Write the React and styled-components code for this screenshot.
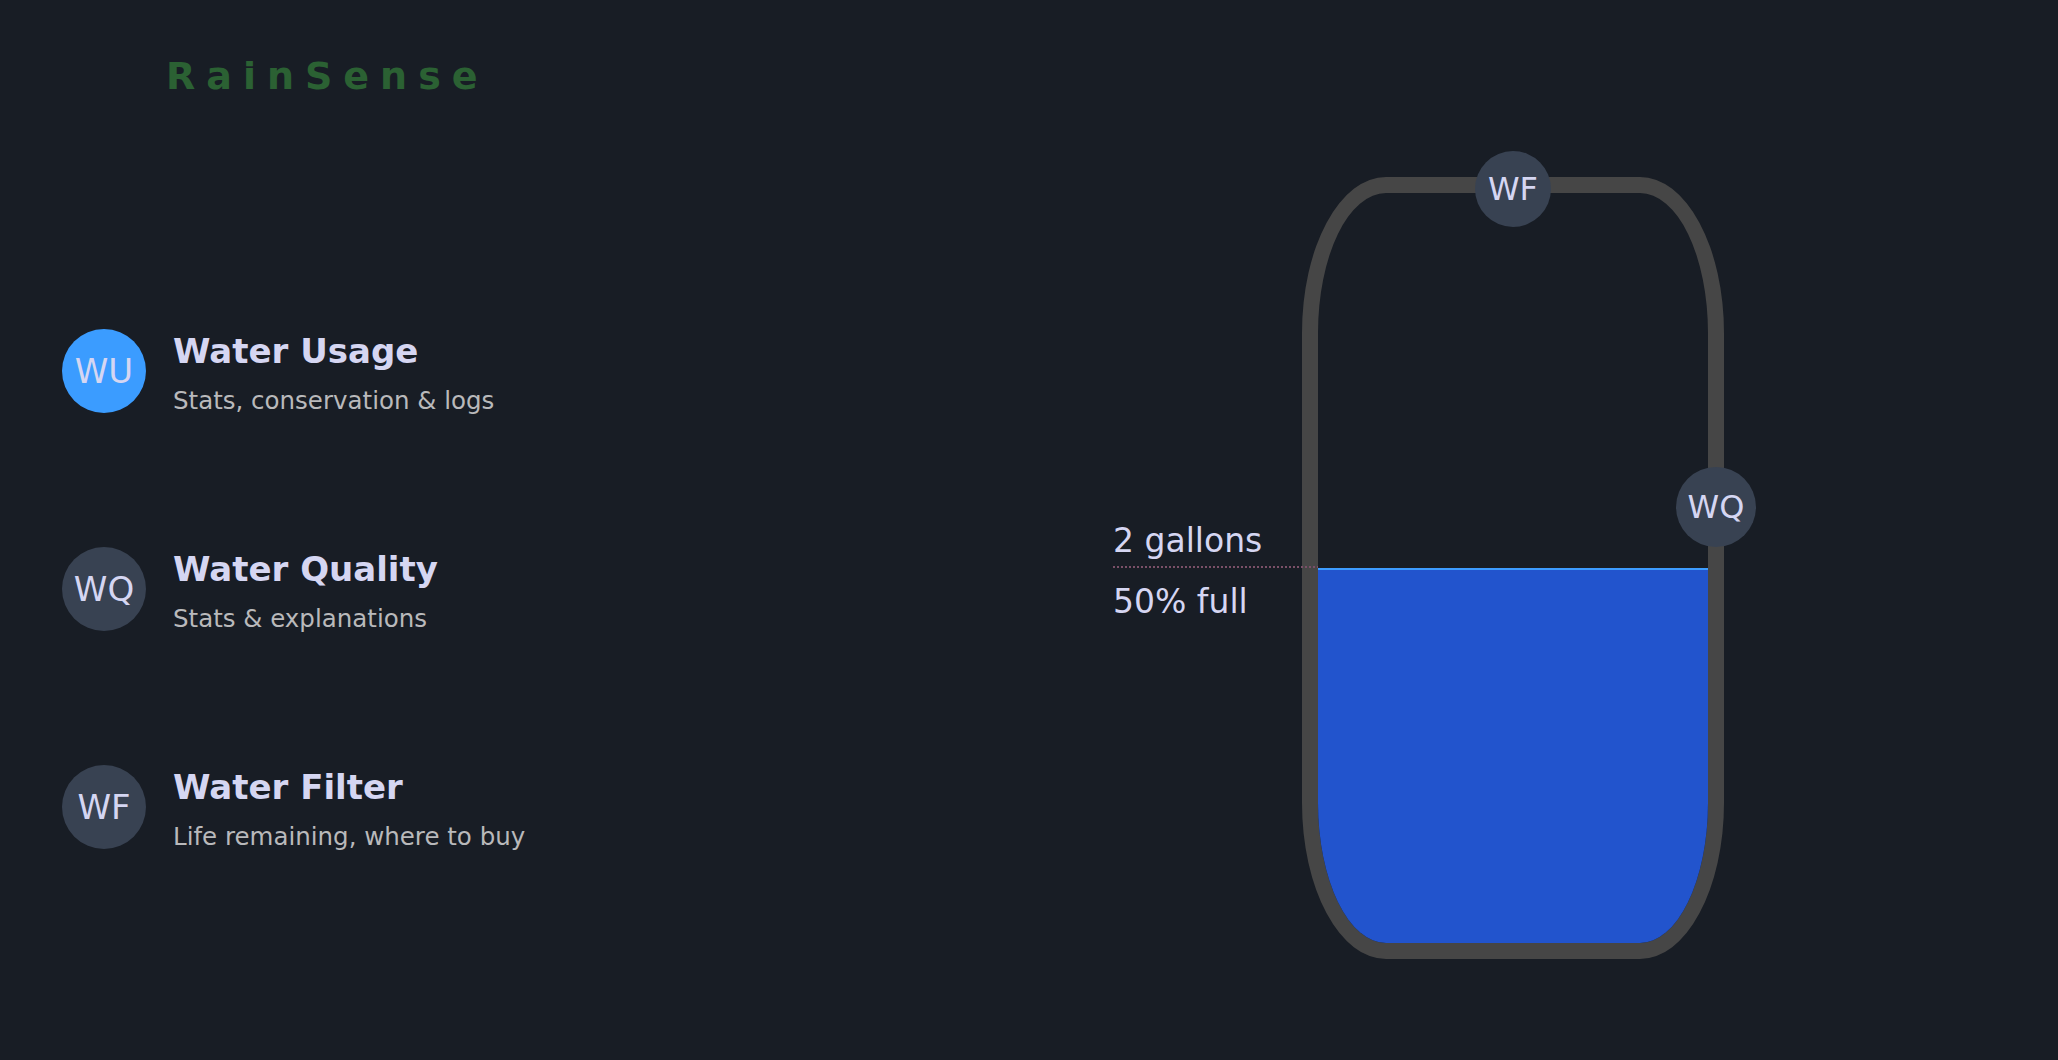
import React from 'react'
import styled, { createGlobalStyle } from 'styled-components'

const GlobalStyle = createGlobalStyle`
  *, *::before, *::after { box-sizing: border-box; }
  html, body { margin: 0; padding: 0; background: #181d25; }
  body {
    font-family: "DejaVu Sans", "Lucida Grande", sans-serif;
    color: #d5d6f2;
  }
`;

const Page = styled.div`
  display: flex;
  min-height: 100vh;
`;

const Sidebar = styled.aside`
  flex: 0 0 620px;
  padding-left: 62px;
`;

const Brand = styled.h1`
  margin: 57px 0 0 104px;
  font-size: 38px;
  line-height: 38px;
  font-weight: 700;
  letter-spacing: 11px;
  color: #2b6133;
`;

const NavList = styled.nav`
  display: flex;
  flex-direction: column;
  gap: 131px;
  margin-top: 234px;
`;

const NavItem = styled.div`
  display: flex;
  align-items: flex-start;
  gap: 27px;
`;

const Avatar = styled.div`
  flex-shrink: 0;
  width: ${({ size }) => size}px;
  height: ${({ size }) => size}px;
  border-radius: 50%;
  background: ${({ active }) => (active ? '#3b9cff' : '#384252')};
  display: flex;
  align-items: center;
  justify-content: center;
  font-size: ${({ fontSize }) => fontSize}px;
  color: #d5d6f2;
`;

const NavText = styled.div`
  padding-top: 2px;
`;

const NavTitle = styled.div`
  font-size: 34px;
  line-height: 40px;
  font-weight: 700;
  margin-bottom: 15px;
  color: #d5d6f2;
`;

const NavSub = styled.div`
  font-size: 24.5px;
  line-height: 30px;
  color: #b9b9bb;
`;

const Stage = styled.main`
  flex: 1;
  padding: 177px 0 0 682px;
`;

const Tank = styled.div`
  position: relative;
  width: 422px;
  height: 782px;
  border: 16px solid #464646;
  border-radius: 84px / 156px;
`;

const TankClip = styled.div`
  height: 100%;
  border-radius: 68px / 140px;
  overflow: hidden;
  display: flex;
  flex-direction: column;
  justify-content: flex-end;
`;

const Water = styled.div`
  background: #2254cd;
  border-top: 2px solid #3d9cff;
`;

const LevelLabel = styled.div`
  position: absolute;
  right: 100%;
  width: 205px;
  margin-top: -47px;
  font-size: 33px;
  color: #d5d6f2;
`;

const Amount = styled.div`
  line-height: 40px;
  padding-bottom: 5px;
`;

const Rule = styled.div`
  height: 2px;
  background: repeating-linear-gradient(90deg, #7a5068 0 2px, transparent 2px 4px);
`;

const Percent = styled.div`
  line-height: 40px;
  padding-top: 14px;
`;

const Badge = styled(Avatar)`
  position: absolute;
  transform: translate(-50%, -50%);
`;

const sections = [
  { id: 'WU', title: 'Water Usage', sub: 'Stats, conservation & logs', active: true },
  { id: 'WQ', title: 'Water Quality', sub: 'Stats & explanations' },
  { id: 'WF', title: 'Water Filter', sub: 'Life remaining, where to buy' },
];

const tank = { gallons: 2, level: 50 };

export default function App() {
  return (
    <>
      <GlobalStyle />
      <Page>
        <Sidebar>
          <Brand>RainSense</Brand>
          <NavList>
            {sections.map((s) => (
              <NavItem key={s.id}>
                <Avatar size={84} fontSize={34} active={s.active}>{s.id}</Avatar>
                <NavText>
                  <NavTitle>{s.title}</NavTitle>
                  <NavSub>{s.sub}</NavSub>
                </NavText>
              </NavItem>
            ))}
          </NavList>
        </Sidebar>
        <Stage>
          <Tank>
            <TankClip>
              <Water style={{ height: `${tank.level}%` }} />
            </TankClip>
            <LevelLabel style={{ top: `${100 - tank.level}%` }}>
              <Amount>{tank.gallons} gallons</Amount>
              <Rule />
              <Percent>{tank.level}% full</Percent>
            </LevelLabel>
            <Badge size={76} fontSize={32} style={{ left: '50%', top: '-4px' }}>WF</Badge>
            <Badge size={80} fontSize={32} style={{ left: 'calc(100% + 8px)', top: '41.9%' }}>WQ</Badge>
          </Tank>
        </Stage>
      </Page>
    </>
  );
}
